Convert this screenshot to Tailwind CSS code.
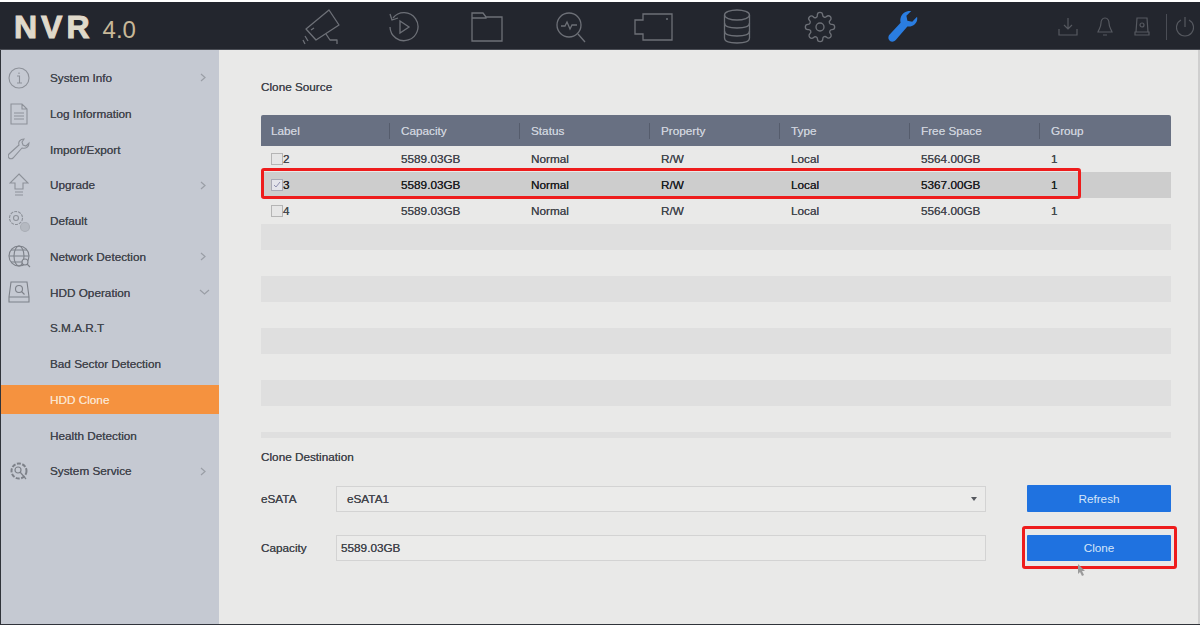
<!DOCTYPE html>
<html lang="en">
<head>
  <meta charset="UTF-8" />
  <title>NVR 4.0 HDD Clone</title>
  <script src="https://cdn.jsdelivr.net/npm/@tailwindcss/browser@4"></script>
</head>
<body class="w-[1200px] h-[625px] overflow-hidden bg-white font-['Liberation_Sans',Arial,sans-serif] text-[11.75px] text-[#43464d] [text-shadow:0_0_0.4px_currentColor]">
  <div class="relative w-[1200px] h-[625px] flex flex-col pt-[2px] border-b border-[#30333a]">

    <!-- top bar -->
    <header class="h-[48px] shrink-0 bg-[#23262e] flex items-center pt-[2px] border-b border-[#4a4d55]">
      <div class="w-[279px] pl-[14px] flex items-baseline gap-[9px] [text-shadow:none]">
        <span class="text-[32px] leading-none font-bold tracking-[4px] text-[#e0d9ca] [-webkit-text-stroke:1px_#e0d9ca]">NVR</span>
        <span class="text-[24px] leading-none text-[#c8b898]">4.0</span>
      </div>
      <div class="flex items-center text-[#6d7077]">
        <!-- camera -->
        <div class="w-[83.3px] flex justify-center"><svg class="w-[38px] h-[36px]" viewBox="0 0 38 36" fill="none" stroke="currentColor" stroke-width="1.3" stroke-linejoin="round"><path d="M4 20L27 1l10 15-23 15z"/><path d="M9 21l3 -2"/><path d="M24 25l4 6h7v4"/><path d="M3 27l3 5M1 31l2 4"/></svg></div>
        <!-- playback -->
        <div class="w-[83.3px] flex justify-center"><svg class="w-[31px] h-[34px]" viewBox="0 0 31 34" fill="none" stroke="currentColor" stroke-width="1.3"><path d="M5 8A14 14 0 1 1 2 17"/><path d="M2 4l2 6 6 -2"/><path d="M12 11l9 6 -9 6z"/></svg></div>
        <!-- folder -->
        <div class="w-[83.3px] flex justify-center"><svg class="w-[32px] h-[30px]" viewBox="0 0 32 30" fill="none" stroke="currentColor" stroke-width="1.3"><path d="M1 1h11l3 4h16v24H1z"/><path d="M15 5v1H1"/></svg></div>
        <!-- search pulse -->
        <div class="w-[83.3px] flex justify-center"><svg class="w-[30px] h-[32px]" viewBox="0 0 30 32" fill="none" stroke="currentColor" stroke-width="1.3"><circle cx="13" cy="14" r="12"/><path d="M22 23l7 8"/><path d="M5 15h4l2 -4 3 7 2 -4h5"/></svg></div>
        <!-- video camera -->
        <div class="w-[83.3px] flex justify-center"><svg class="w-[39px] h-[28px]" viewBox="0 0 39 28" fill="none" stroke="currentColor" stroke-width="1.3"><path d="M9 1h29v26H9v-6H1V7h8z"/><path d="M32 6h2"/></svg></div>
        <!-- database -->
        <div class="w-[83.3px] flex justify-center"><svg class="w-[28px] h-[35px]" viewBox="0 0 28 35" fill="none" stroke="currentColor" stroke-width="1.3"><ellipse cx="14" cy="6" rx="12.500" ry="5"/><path d="M1.500 6v23c0 3 5 5 12.500 5s12.500 -2 12.500 -5V6"/><path d="M1.500 14c0 3 5 5 12.500 5s12.500 -2 12.500 -5M1.500 22c0 3 5 5 12.500 5s12.500 -2 12.500 -5"/></svg></div>
        <!-- gear -->
        <div class="w-[83.3px] flex justify-center"><svg class="w-[32px] h-[32px]" viewBox="0 0 24 24" fill="none" stroke="currentColor" stroke-width="1"><circle cx="12" cy="12" r="3"/><path d="M19.4 15a1.65 1.65 0 0 0 .33 1.82l.06.06a2 2 0 1 1-2.83 2.83l-.06-.06a1.65 1.65 0 0 0-2.82 1.17V21a2 2 0 1 1-4 0v-.09a1.65 1.65 0 0 0-2.82-1.12l-.06.06a2 2 0 1 1-2.83-2.83l.06-.06A1.65 1.65 0 0 0 3.09 14H3a2 2 0 1 1 0-4h.09a1.65 1.65 0 0 0 1.12-2.82l-.06-.06a2 2 0 1 1 2.83-2.83l.06.06A1.65 1.65 0 0 0 10 3.09V3a2 2 0 1 1 4 0v.09a1.65 1.65 0 0 0 2.82 1.12l.06-.06a2 2 0 1 1 2.83 2.83l-.06.06A1.65 1.65 0 0 0 20.91 10H21a2 2 0 1 1 0 4h-.09a1.65 1.65 0 0 0-1.51 1z"/></svg></div>
        <!-- wrench -->
        <div class="w-[83.3px] flex justify-center"><svg class="w-[31px] h-[35px]" viewBox="0 0 32 34"><path fill="#2a7de1" d="M30 7c1 5 -2 9 -7 10 -1 0 -2 0 -3 0L8 31c-2 2 -4 2 -6 1 -2 -2 -2 -4 -1 -6L13 13c-1 -5 1 -9 5 -11 2 -1 4 -1 6 -1l-5 5 1 5 5 1z"/></svg></div>
      </div>
      <div class="ml-auto mr-[6px] flex items-center text-[#565960]">
        <svg class="w-[20px] h-[19px]" viewBox="0 0 20 19" fill="none" stroke="currentColor" stroke-width="1.2"><path d="M10 1v11M6 8l4 4 4 -4M1 12v6h18v-6"/></svg>
        <svg class="ml-[19px] w-[16px] h-[19px]" viewBox="0 0 16 19" fill="none" stroke="currentColor" stroke-width="1.2"><path d="M8 1c-3 0 -4 3 -4 5 0 4 -2 6 -3 9h14c-1 -3 -3 -5 -3 -9 0 -2 -1 -5 -4 -5zM6 18h4"/></svg>
        <svg class="ml-[21px] w-[16px] h-[19px]" viewBox="0 0 16 19" fill="none" stroke="currentColor" stroke-width="1.2"><path d="M3 1h10l1 14H2zM1 15h14v3H1z"/><circle cx="8" cy="8" r="2"/></svg>
        <div class="ml-[16px] w-px h-[26px] bg-[#4a4d55]"></div>
        <svg class="ml-[9px] w-[18px] h-[24px]" viewBox="0 0 18 24" fill="none" stroke="currentColor" stroke-width="1.2"><path d="M9 2v10M5 5a8.500 8.500 0 1 0 8 0"/></svg>
      </div>
    </header>

    <div class="flex-1 flex min-h-0 border-l border-[#30333a]">
      <!-- sidebar -->
      <aside class="w-[218px] shrink-0 bg-[#c5c9d2] pt-[10px] text-[#43464e]">
        <div class="h-[35.75px] flex items-center"><svg class="ml-[7px] w-[22px] h-[22px] text-[#8d9199]" viewBox="0 0 22 22" fill="none" stroke="currentColor" stroke-width="1.1"><circle cx="11" cy="11" r="10"/><path d="M9 9h2.500v7M9 16h5M11 5.500v1.500"/></svg><span class="ml-[20px]">System Info</span><svg class="ml-auto mr-[13px] w-[6px] h-[9px] text-[#9a9ea6]" viewBox="0 0 6 9" fill="none" stroke="currentColor" stroke-width="1.2"><path d="M1 1l4 3.500-4 3.500"/></svg></div>
        <div class="h-[35.75px] flex items-center"><svg class="ml-[8px] w-[20px] h-[22px] text-[#8d9199]" viewBox="0 0 20 22" fill="none" stroke="currentColor" stroke-width="1.1"><path d="M2 1h11l5 5v15H2zM13 1v5h5M5 10h10M5 13h10M5 16h10"/></svg><span class="ml-[21px]">Log Information</span></div>
        <div class="h-[35.75px] flex items-center"><svg class="ml-[7px] w-[22px] h-[22px] text-[#8d9199]" viewBox="0 0 22 22" fill="none" stroke="currentColor" stroke-width="1.1"><path d="M21 5c0 4 -3 6 -7 5L5 20c-1 1 -3 1 -4 0s-1 -3 0 -4L11 7c-1 -3 1 -6 5 -6l-2 3 1 3 3 1z"/></svg><span class="ml-[20px]">Import/Export</span></div>
        <div class="h-[35.75px] flex items-center"><svg class="ml-[8px] w-[20px] h-[24px] text-[#8d9199]" viewBox="0 0 20 24" fill="none" stroke="currentColor" stroke-width="1.1"><path d="M10 1l9 9h-5v6H6v-6H1zM6 19h8M6 22h8"/></svg><span class="ml-[21px]">Upgrade</span><svg class="ml-auto mr-[13px] w-[6px] h-[9px] text-[#9a9ea6]" viewBox="0 0 6 9" fill="none" stroke="currentColor" stroke-width="1.2"><path d="M1 1l4 3.500-4 3.500"/></svg></div>
        <div class="h-[35.75px] flex items-center"><svg class="ml-[7px] w-[23px] h-[24px] text-[#8d9199]" viewBox="0 0 23 24" fill="none" stroke="currentColor" stroke-width="1.1"><circle cx="8" cy="9" r="6.500" stroke-dasharray="3 1"/><circle cx="8" cy="9" r="2.500"/><circle cx="17" cy="18" r="4.500" fill="#b5b9c1" stroke="#a9adb5"/></svg><span class="ml-[19px]">Default</span></div>
        <div class="h-[35.75px] flex items-center"><svg class="ml-[7px] w-[23px] h-[23px] text-[#7d8189]" viewBox="0 0 23 23" fill="none" stroke="currentColor" stroke-width="1.1"><circle cx="11" cy="11" r="10"/><ellipse cx="11" cy="11" rx="5" ry="10"/><path d="M1 11h20M3 5h16M3 17h16"/><circle cx="17" cy="17" r="3" fill="#c5c9d2"/><path d="M19 19l3 3"/></svg><span class="ml-[19px]">Network Detection</span><svg class="ml-auto mr-[13px] w-[6px] h-[9px] text-[#9a9ea6]" viewBox="0 0 6 9" fill="none" stroke="currentColor" stroke-width="1.2"><path d="M1 1l4 3.500-4 3.500"/></svg></div>
        <div class="h-[35.75px] flex items-center"><svg class="ml-[7px] w-[22px] h-[22px] text-[#7d8189]" viewBox="0 0 22 22" fill="none" stroke="currentColor" stroke-width="1.1"><path d="M3 1h16l2 15v5H1v-5zM1 16h20"/><circle cx="11" cy="8" r="3.500"/><path d="M13.500 10.500l3 3"/></svg><span class="ml-[20px]">HDD Operation</span><svg class="ml-auto mr-[9px] w-[11px] h-[6px] text-[#9a9ea6]" viewBox="0 0 11 6" fill="none" stroke="currentColor" stroke-width="1.2"><path d="M1 1l4.500 4 4.500 -4"/></svg></div>
        <div class="h-[35.75px] flex items-center pl-[49px]">S.M.A.R.T</div>
        <div class="h-[35.75px] flex items-center pl-[49px]">Bad Sector Detection</div>
        <div class="h-[35.75px] flex items-center"><div class="w-full h-[29px] flex items-center pl-[49px] bg-[#f5923f] text-[#fbe3cb]">HDD Clone</div></div>
        <div class="h-[35.75px] flex items-center pl-[49px]">Health Detection</div>
        <div class="h-[35.75px] flex items-center"><svg class="ml-[8px] w-[20px] h-[20px] text-[#7d8189]" viewBox="0 0 20 20" fill="none" stroke="currentColor" stroke-width="1.2"><circle cx="10" cy="10" r="7.500" stroke-dasharray="4 1.500" stroke-width="2"/><circle cx="9" cy="9" r="3"/><path d="M11 11l6 7"/></svg><span class="ml-[21px]">System Service</span><svg class="ml-auto mr-[13px] w-[6px] h-[9px] text-[#9a9ea6]" viewBox="0 0 6 9" fill="none" stroke="currentColor" stroke-width="1.2"><path d="M1 1l4 3.500-4 3.500"/></svg></div>
      </aside>

      <!-- main -->
      <main class="flex-1 bg-[#e9e9e8] pl-[42px] border-r-2 border-[#cfcfcf] min-w-0">
        <div class="h-[65px] pt-[29px] leading-[16px]">Clone Source</div>

        <div class="w-[910px]">
          <div class="grid grid-cols-7 h-[31px] items-center bg-[#687082] rounded-t-[2px] text-[#cbd0da]">
            <div class="pl-[10px] h-[16px] leading-[16px] border-r border-[#555c6c] w-[129px]">Label</div>
            <div class="pl-[10px] h-[16px] leading-[16px] border-r border-[#555c6c] w-[129px]">Capacity</div>
            <div class="pl-[10px] h-[16px] leading-[16px] border-r border-[#555c6c] w-[129px]">Status</div>
            <div class="pl-[10px] h-[16px] leading-[16px] border-r border-[#555c6c] w-[129px]">Property</div>
            <div class="pl-[10px] h-[16px] leading-[16px] border-r border-[#555c6c] w-[129px]">Type</div>
            <div class="pl-[10px] h-[16px] leading-[16px] border-r border-[#555c6c] w-[129px]">Free Space</div>
            <div class="pl-[10px] h-[16px] leading-[16px]">Group</div>
          </div>
          <div class="grid grid-cols-7 h-[26px] items-center">
            <div class="pl-[10px] flex items-center"><span class="w-[12px] h-[12px] border border-[#b5b5b5] bg-[#e6e6e6]"></span>2</div>
            <div class="pl-[10px]">5589.03GB</div><div class="pl-[10px]">Normal</div><div class="pl-[10px]">R/W</div><div class="pl-[10px]">Local</div><div class="pl-[10px]">5564.00GB</div><div class="pl-[10px]">1</div>
          </div>
          <div class="grid grid-cols-7 h-[26px] items-center bg-[#cdcdcd] text-[#1d1f23]">
            <div class="pl-[10px] flex items-center"><span class="w-[12px] h-[12px] border border-[#a9a9b5] bg-[#e3e3ea] flex items-center justify-center"><svg class="w-[8px] h-[8px]" viewBox="0 0 8 8" fill="none" stroke="#8f8fb0" stroke-width="1"><path d="M1 4l2 2 4 -5"/></svg></span>3</div>
            <div class="pl-[10px]">5589.03GB</div><div class="pl-[10px]">Normal</div><div class="pl-[10px]">R/W</div><div class="pl-[10px]">Local</div><div class="pl-[10px]">5367.00GB</div><div class="pl-[10px]">1</div>
          </div>
          <div class="grid grid-cols-7 h-[26px] items-center">
            <div class="pl-[10px] flex items-center"><span class="w-[12px] h-[12px] border border-[#b5b5b5] bg-[#e6e6e6]"></span>4</div>
            <div class="pl-[10px]">5589.03GB</div><div class="pl-[10px]">Normal</div><div class="pl-[10px]">R/W</div><div class="pl-[10px]">Local</div><div class="pl-[10px]">5564.00GB</div><div class="pl-[10px]">1</div>
          </div>
          <div class="h-[26px] bg-[#dfdfdf]"></div>
          <div class="h-[26px]"></div>
          <div class="h-[26px] bg-[#dfdfdf]"></div>
          <div class="h-[26px]"></div>
          <div class="h-[26px] bg-[#dfdfdf]"></div>
          <div class="h-[26px]"></div>
          <div class="h-[26px] bg-[#dfdfdf]"></div>
          <div class="h-[26px]"></div>
          <div class="h-[6px] bg-[#dfdfdf]"></div>
        </div>

        <div class="mt-[11px] h-[16px] leading-[16px]">Clone Destination</div>

        <div class="w-[910px] mt-[20px] flex items-center h-[27px]">
          <div class="w-[75px]">eSATA</div>
          <div class="w-[650px] h-[26px] border border-[#d3d3d3] bg-[#ebebea] flex items-center pl-[10px]">eSATA1<span class="ml-auto mr-[8px] border-x-[3px] border-t-[4px] border-x-transparent border-t-[#55585e]"></span></div>
          <button class="ml-[41px] w-[144px] h-[27px] bg-[#1f72e0] rounded-[1px] text-[#d5e5f9]">Refresh</button>
        </div>
        <div class="w-[910px] mt-[23px] flex items-center h-[26px]">
          <div class="w-[75px]">Capacity</div>
          <div class="w-[650px] h-[26px] border border-[#d3d3d3] bg-[#ebebea] flex items-center pl-[4px]">5589.03GB</div>
          <button class="ml-[41px] w-[144px] h-[26px] bg-[#1f72e0] rounded-[1px] text-[#d5e5f9]">Clone</button>
        </div>
      </main>
    </div>

    <!-- annotations drawn over the screenshot -->
    <div class="absolute left-[261px] top-[168px] w-[820px] h-[31px] border-[3px] border-[#ee1c1c] rounded-[3px]"></div>
    <div class="absolute left-[1022px] top-[526px] w-[155px] h-[43px] border-[3px] border-[#ee1c1c] rounded-[3px]"></div>
    <svg class="absolute left-[1077px] top-[563px] w-[9px] h-[13px]" viewBox="0 0 9 13"><path fill="#9a9a9a" d="M1 1l7 7H5l2 4 -2 1 -2 -4 -2 2z"/></svg>
  </div>
</body>
</html>
